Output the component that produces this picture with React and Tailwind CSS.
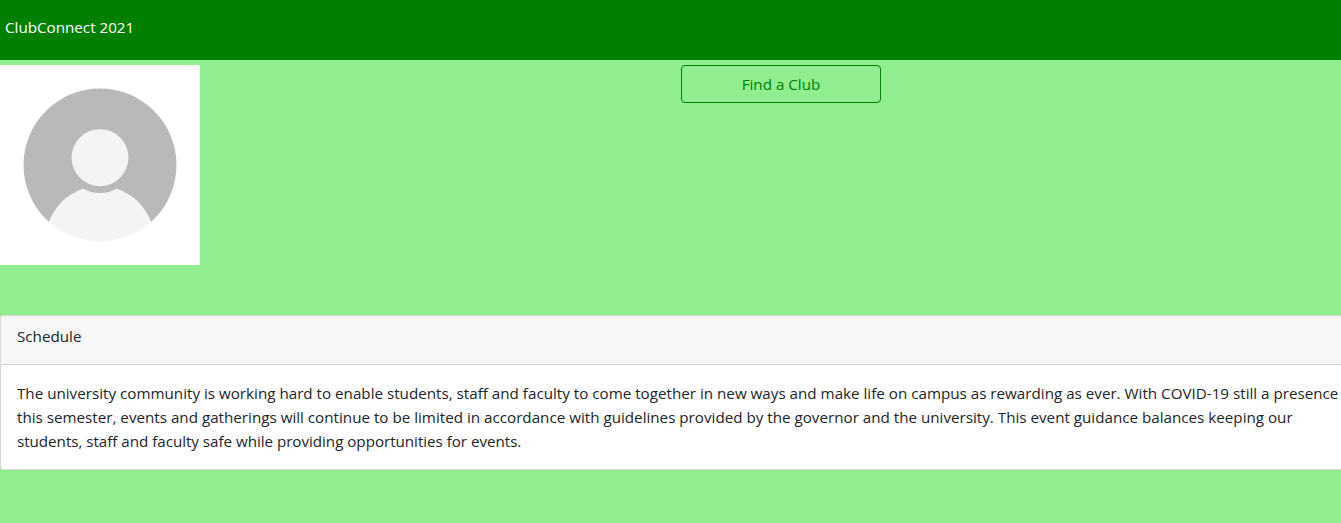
export default function App() {
  return (
    <div className="h-[523px] overflow-hidden bg-[#90ee90] font-['Open_Sans',sans-serif] text-[15.2px] leading-6 text-[#212529]">
      <header className="h-[60px] bg-[#008000] px-[5px] pt-[15px] text-white">
        <span className="inline-block whitespace-nowrap">ClubConnect 2021</span>
      </header>
      <main className="pt-[5px]">
        <div className="flex h-[250px] items-start">
          <svg className="mr-[481px] size-[200px] shrink-0 bg-white" viewBox="0 0 200 200">
            <defs>
              <clipPath id="disc"><circle cx="100" cy="100" r="76.5" /></clipPath>
              <clipPath id="backdrop"><rect width="200" height="157" /></clipPath>
            </defs>
            <circle cx="100" cy="100" r="76.500" fill="#b9b9b9" clipPath="url(#backdrop)" />
            <g clipPath="url(#disc)">
              <path d="M48.500 157.500C55 141 67 129 83.300 123.800A35 35 0 0 0 116.700 123.800C133 129 145 141 151.500 157.500V180H48.500Z" fill="#f4f4f4" />
            </g>
            <circle cx="100" cy="92.700" r="28.500" fill="#f4f4f4" />
          </svg>
          <button className="h-[38px] w-[200px] rounded border border-[#008000] text-[#008000]">Find a Club</button>
        </div>
        <section className="h-[155px] w-[1350px] overflow-hidden rounded border border-black/15 bg-white">
          <div className="h-[49px] border-b border-black/15 bg-[#f7f7f7] px-4 pt-2">Schedule</div>
          <div className="px-4 pt-4 whitespace-nowrap">
            <p>The university community is working hard to enable students, staff and faculty to come together in new ways and make life on campus as rewarding as ever. With COVID-19 still a presence</p>
            <p>this semester, events and gatherings will continue to be limited in accordance with guidelines provided by the governor and the university. This event guidance balances keeping our</p>
            <p className="tracking-[-0.035px]">students, staff and faculty safe while providing opportunities for events.</p>
          </div>
        </section>
      </main>
    </div>
  );
}
